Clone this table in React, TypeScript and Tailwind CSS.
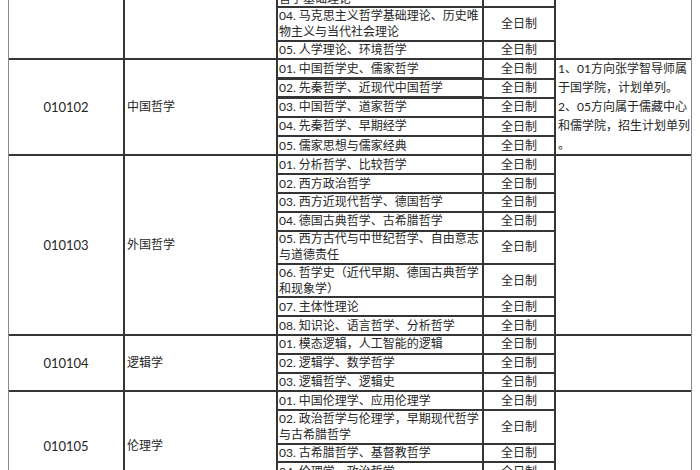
import * as React from "react";

type Direction = { lines: string[] };

type Group = {
  code: string;
  name: string;
  directions: Direction[];
  note?: string[];
};

const spanClass: Record<number, string> = {
  3: "row-span-3",
  5: "row-span-5",
  8: "row-span-8",
};

const groups: Group[] = [
  {
    code: "010101",
    name: "马克思主义哲学",
    directions: [
      { lines: ["01. 马克思主义哲学史、马克思主义哲学", "原理"] },
      { lines: ["02. 马克思主义与当代中国"] },
      { lines: ["03. 国外马克思主义与马克思主义", "哲学基础理论"] },
      { lines: ["04. 马克思主义哲学基础理论、历史唯", "物主义与当代社会理论"] },
      { lines: ["05. 人学理论、环境哲学"] },
    ],
  },
  {
    code: "010102",
    name: "中国哲学",
    directions: [
      { lines: ["01. 中国哲学史、儒家哲学"] },
      { lines: ["02. 先秦哲学、近现代中国哲学"] },
      { lines: ["03. 中国哲学、道家哲学"] },
      { lines: ["04. 先秦哲学、早期经学"] },
      { lines: ["05. 儒家思想与儒家经典"] },
    ],
    note: [
      "1、01方向张学智导师属",
      "于国学院，计划单列。",
      "2、05方向属于儒藏中心",
      "和儒学院，招生计划单列",
      "。",
    ],
  },
  {
    code: "010103",
    name: "外国哲学",
    directions: [
      { lines: ["01. 分析哲学、比较哲学"] },
      { lines: ["02. 西方政治哲学"] },
      { lines: ["03. 西方近现代哲学、德国哲学"] },
      { lines: ["04. 德国古典哲学、古希腊哲学"] },
      { lines: ["05. 西方古代与中世纪哲学、自由意志", "与道德责任"] },
      { lines: ["06. 哲学史（近代早期、德国古典哲学", "和现象学）"] },
      { lines: ["07. 主体性理论"] },
      { lines: ["08. 知识论、语言哲学、分析哲学"] },
    ],
  },
  {
    code: "010104",
    name: "逻辑学",
    directions: [
      { lines: ["01. 模态逻辑，人工智能的逻辑"] },
      { lines: ["02. 逻辑学、数学哲学"] },
      { lines: ["03. 逻辑哲学、逻辑史"] },
    ],
  },
  {
    code: "010105",
    name: "伦理学",
    directions: [
      { lines: ["01. 中国伦理学、应用伦理学"] },
      { lines: ["02. 政治哲学与伦理学，早期现代哲学", "与古希腊哲学"] },
      { lines: ["03. 古希腊哲学、基督教哲学"] },
      { lines: ["04. 伦理学、政治哲学"] },
      { lines: ["05. 美学、艺术哲学"] },
    ],
  },
];

function GroupRows({ group }: { group: Group }) {
  const span = spanClass[group.directions.length];
  return (
    <>
      <div className={`${span} col-start-1 flex items-center justify-center bg-white text-[13px]`}>
        {group.code}
      </div>
      <div className={`${span} col-start-2 flex items-center bg-white pl-[2px]`}>
        {group.name}
      </div>
      {group.directions.map((d, i) => (
        <React.Fragment key={i}>
          <div
            className={`col-start-3 flex flex-col justify-center overflow-hidden whitespace-nowrap bg-white pl-[1px] ${
              d.lines.length > 1 ? "h-[31.4px]" : "h-[16.8px]"
            }`}
          >
            {d.lines.map((l, j) => (
              <span key={j}>{l}</span>
            ))}
          </div>
          <div className="col-start-4 flex min-h-0 items-center justify-center overflow-hidden bg-white">
            全日制
          </div>
          {i === 0 && (
            <div className={`${span} col-start-5 whitespace-nowrap bg-white pl-[2px] leading-[18.8px]`}>
              {group.note?.map((l, j) => (
                <div key={j}>{l}</div>
              ))}
            </div>
          )}
        </React.Fragment>
      ))}
    </>
  );
}

export default function App() {
  return (
    <div className="h-[470px] w-[700px] overflow-hidden bg-white">
      <div
        className="ml-[8px] mt-[-77.3px] grid w-[684px] grid-cols-[114px_151px_204px_70px_135px] gap-[2px] border-x border-[#8a8a8a] bg-[#353535] text-[12px] leading-[16px] text-[#262626]"
        style={{ fontFamily: '"Lato", "Noto Sans CJK SC", sans-serif' }}
      >
        {groups.map((g) => (
          <GroupRows key={g.code} group={g} />
        ))}
      </div>
    </div>
  );
}
